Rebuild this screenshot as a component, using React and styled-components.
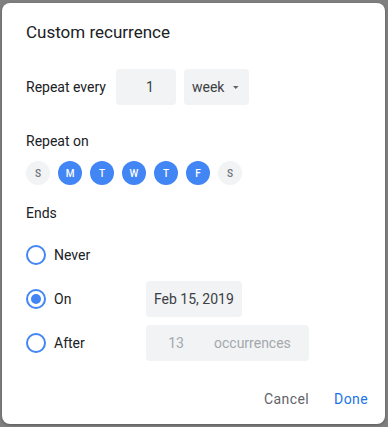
import React from "react";
import styled, { createGlobalStyle } from "styled-components";

const Global = createGlobalStyle`
  html, body {
    margin: 0;
    padding: 0;
    background: #7f7f7f;
    min-height: 100%;
  }
  body {
    font-family: Roboto, "Liberation Sans", Arial, sans-serif;
    -webkit-font-smoothing: antialiased;
  }
  * { box-sizing: border-box; }
`;

const Page = styled.div`
  width: 388px;
  height: 427px;
  padding: 3px 0 0 2px;
  background: #7f7f7f;
`;

const Dialog = styled.div`
  width: 383px;
  height: 421px;
  background: #fff;
  border-radius: 8px;
  padding: 17px 9px 7px 24px;
  display: flex;
  flex-direction: column;
  box-shadow: 0 1px 3px rgba(0, 0, 0, 0.3);
`;

const Title = styled.h1`
  margin: 0;
  font-size: 17px;
  line-height: 24px;
  font-weight: 400;
  color: #202124;
`;

const RepeatRow = styled.div`
  margin-top: 25px;
  height: 36px;
  display: flex;
  align-items: center;
  gap: 8px;
`;

const Text = styled.span`
  font-size: 14px;
  line-height: 20px;
  color: #202124;
`;

const RowLabel = styled(Text)`
  margin-right: 2px;
`;

const Field = styled.div`
  height: 36px;
  width: ${(p) => p.$w}px;
  background: #f1f3f4;
  border-radius: 4px;
  display: flex;
  align-items: center;
  font-size: 14px;
  color: ${(p) => (p.$muted ? "#a4a8ac" : "#3c4043")};
  padding: 0 0 0 8px;
`;

const NumberField = styled(Field)`
  justify-content: center;
`;

const SelectField = styled(Field)`
  padding: 0 10px 0 8px;
  gap: 9px;
`;

const Caret = styled.svg`
  width: 6px;
  height: 3px;
  margin-top: 1px;
`;

const SectionLabel = styled(Text)`
  display: block;
  margin-top: ${(p) => p.$mt}px;
`;

const DayRow = styled.div`
  margin-top: 10px;
  display: flex;
  gap: 8px;
`;

const Day = styled.div`
  width: 24px;
  height: 24px;
  border-radius: 50%;
  display: flex;
  align-items: center;
  justify-content: center;
  font-size: 10px;
  font-weight: 500;
  background: ${(p) => (p.$on ? "#4285f4" : "#f1f3f4")};
  color: ${(p) => (p.$on ? "#fff" : "#70757a")};
`;

const EndsGrid = styled.div`
  margin-top: 14px;
  display: grid;
  grid-template-columns: 120px auto;
  grid-auto-rows: 36px;
  row-gap: 8px;
  align-items: center;
  justify-items: start;
`;

const Option = styled.label`
  display: flex;
  align-items: center;
  gap: 8px;
`;

const Radio = styled.span`
  width: 20px;
  height: 20px;
  border-radius: 50%;
  border: 2px solid #4285f4;
  display: flex;
  align-items: center;
  justify-content: center;
  &::after {
    content: "";
    width: 10px;
    height: 10px;
    border-radius: 50%;
    background: ${(p) => (p.$checked ? "#4285f4" : "transparent")};
  }
`;

const Count = styled.span`
  width: 60px;
  text-align: center;
  margin-left: -8px;
  margin-right: 8px;
`;

const Footer = styled.div`
  margin-top: auto;
  display: flex;
  justify-content: flex-end;
  gap: 9px;
`;

const Button = styled.button`
  height: 36px;
  padding: 0 8px;
  border: none;
  background: transparent;
  font-family: inherit;
  font-size: 14px;
  font-weight: 400;
  letter-spacing: 0.4px;
  color: ${(p) => (p.$primary ? "#1a73e8" : "#5f6368")};
  cursor: pointer;
`;

const days = [
  ["S", false],
  ["M", true],
  ["T", true],
  ["W", true],
  ["T", true],
  ["F", true],
  ["S", false],
];

export default function App() {
  return (
    <>
      <Global />
      <Page>
        <Dialog>
          <Title>Custom recurrence</Title>
          <RepeatRow>
            <RowLabel>Repeat every</RowLabel>
            <NumberField $w={60}>1</NumberField>
            <SelectField $w={65}>
              week
              <Caret viewBox="0 0 6 3">
                <path d="M0 0h6L3 3z" fill="#5f6368" />
              </Caret>
            </SelectField>
          </RepeatRow>
          <SectionLabel $mt={26}>Repeat on</SectionLabel>
          <DayRow>
            {days.map(([d, on], i) => (
              <Day key={i} $on={on}>
                {d}
              </Day>
            ))}
          </DayRow>
          <SectionLabel $mt={18}>Ends</SectionLabel>
          <EndsGrid>
            <Option>
              <Radio />
              <Text>Never</Text>
            </Option>
            <span />
            <Option>
              <Radio $checked />
              <Text>On</Text>
            </Option>
            <Field $w={96}>Feb 15, 2019</Field>
            <Option>
              <Radio />
              <Text>After</Text>
            </Option>
            <Field $w={163} $muted>
              <Count>13</Count>
              occurrences
            </Field>
          </EndsGrid>
          <Footer>
            <Button>Cancel</Button>
            <Button $primary>Done</Button>
          </Footer>
        </Dialog>
      </Page>
    </>
  );
}
